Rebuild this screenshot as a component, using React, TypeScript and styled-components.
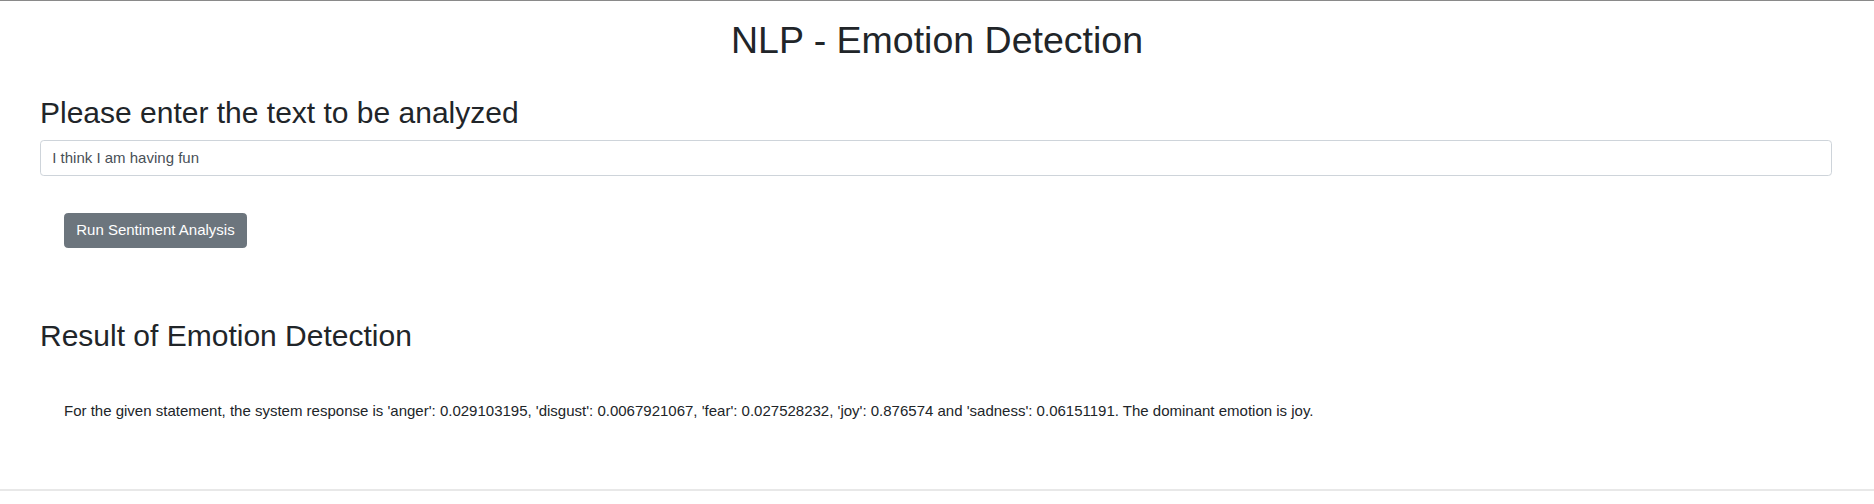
import React from "react";
import styled, { createGlobalStyle } from "styled-components";

const GlobalStyle = createGlobalStyle`
  html, body {
    margin: 0;
    padding: 0;
    background: #ffffff;
  }
  body {
    font-family: "Liberation Sans", Arial, sans-serif;
    font-size: 15px;
    color: #212529;
  }
  * { box-sizing: border-box; }
`;

const Page = styled.div`
  border-top: 1px solid #8a8a8a;
  width: 100%;
`;

const Title = styled.h1`
  margin: 16.5px 0 0;
  font-size: 37.5px;
  line-height: 1.2;
  font-weight: 400;
  text-align: center;
  color: #212529;
`;

const Content = styled.main`
  padding: 0 42px 0 40px;
  display: flex;
  flex-direction: column;
`;

const Heading = styled.h2<{ $top: number }>`
  margin: ${(p) => p.$top}px 0 0;
  font-size: 30px;
  line-height: 1.2;
  font-weight: 400;
  color: #212529;
`;

const TextInput = styled.input`
  margin-top: 9px;
  width: 100%;
  height: 35.5px;
  padding: 0 11.25px;
  border: 1px solid #ced4da;
  border-radius: 3.75px;
  font-family: "Liberation Sans", Arial, sans-serif;
  font-size: 15px;
  color: #495057;
  background: #fff;
  outline: none;
`;

const ButtonRow = styled.div`
  margin-top: 37.5px;
  padding-left: 24px;
  display: flex;
`;

const Button = styled.button`
  height: 35px;
  padding: 0 11.25px;
  border: 1px solid #6c757d;
  border-radius: 3.75px;
  background: #6c757d;
  color: #ffffff;
  font-family: "Liberation Sans", Arial, sans-serif;
  font-size: 15px;
  line-height: 1.5;
  cursor: pointer;
`;

const Result = styled.p`
  margin: 46px 0 0;
  padding-left: 24px;
  font-size: 15px;
  line-height: 1.5;
  color: #212529;
`;

const BottomRule = styled.div`
  margin-top: 66px;
  height: 2px;
  background: #e8e8e8;
`;

export default function App() {
  return (
    <>
      <GlobalStyle />
      <Page>
        <Title>NLP - Emotion Detection</Title>
        <Content>
          <Heading $top={32.5}>Please enter the text to be analyzed</Heading>
          <TextInput type="text" defaultValue="I think I am having fun" />
          <ButtonRow>
            <Button type="button">Run Sentiment Analysis</Button>
          </ButtonRow>
          <Heading $top={70}>Result of Emotion Detection</Heading>
          <Result>
            For the given statement, the system response is 'anger': 0.029103195, 'disgust':
            0.0067921067, 'fear': 0.027528232, 'joy': 0.876574 and 'sadness': 0.06151191. The
            dominant emotion is joy.
          </Result>
        </Content>
        <BottomRule />
      </Page>
    </>
  );
}
